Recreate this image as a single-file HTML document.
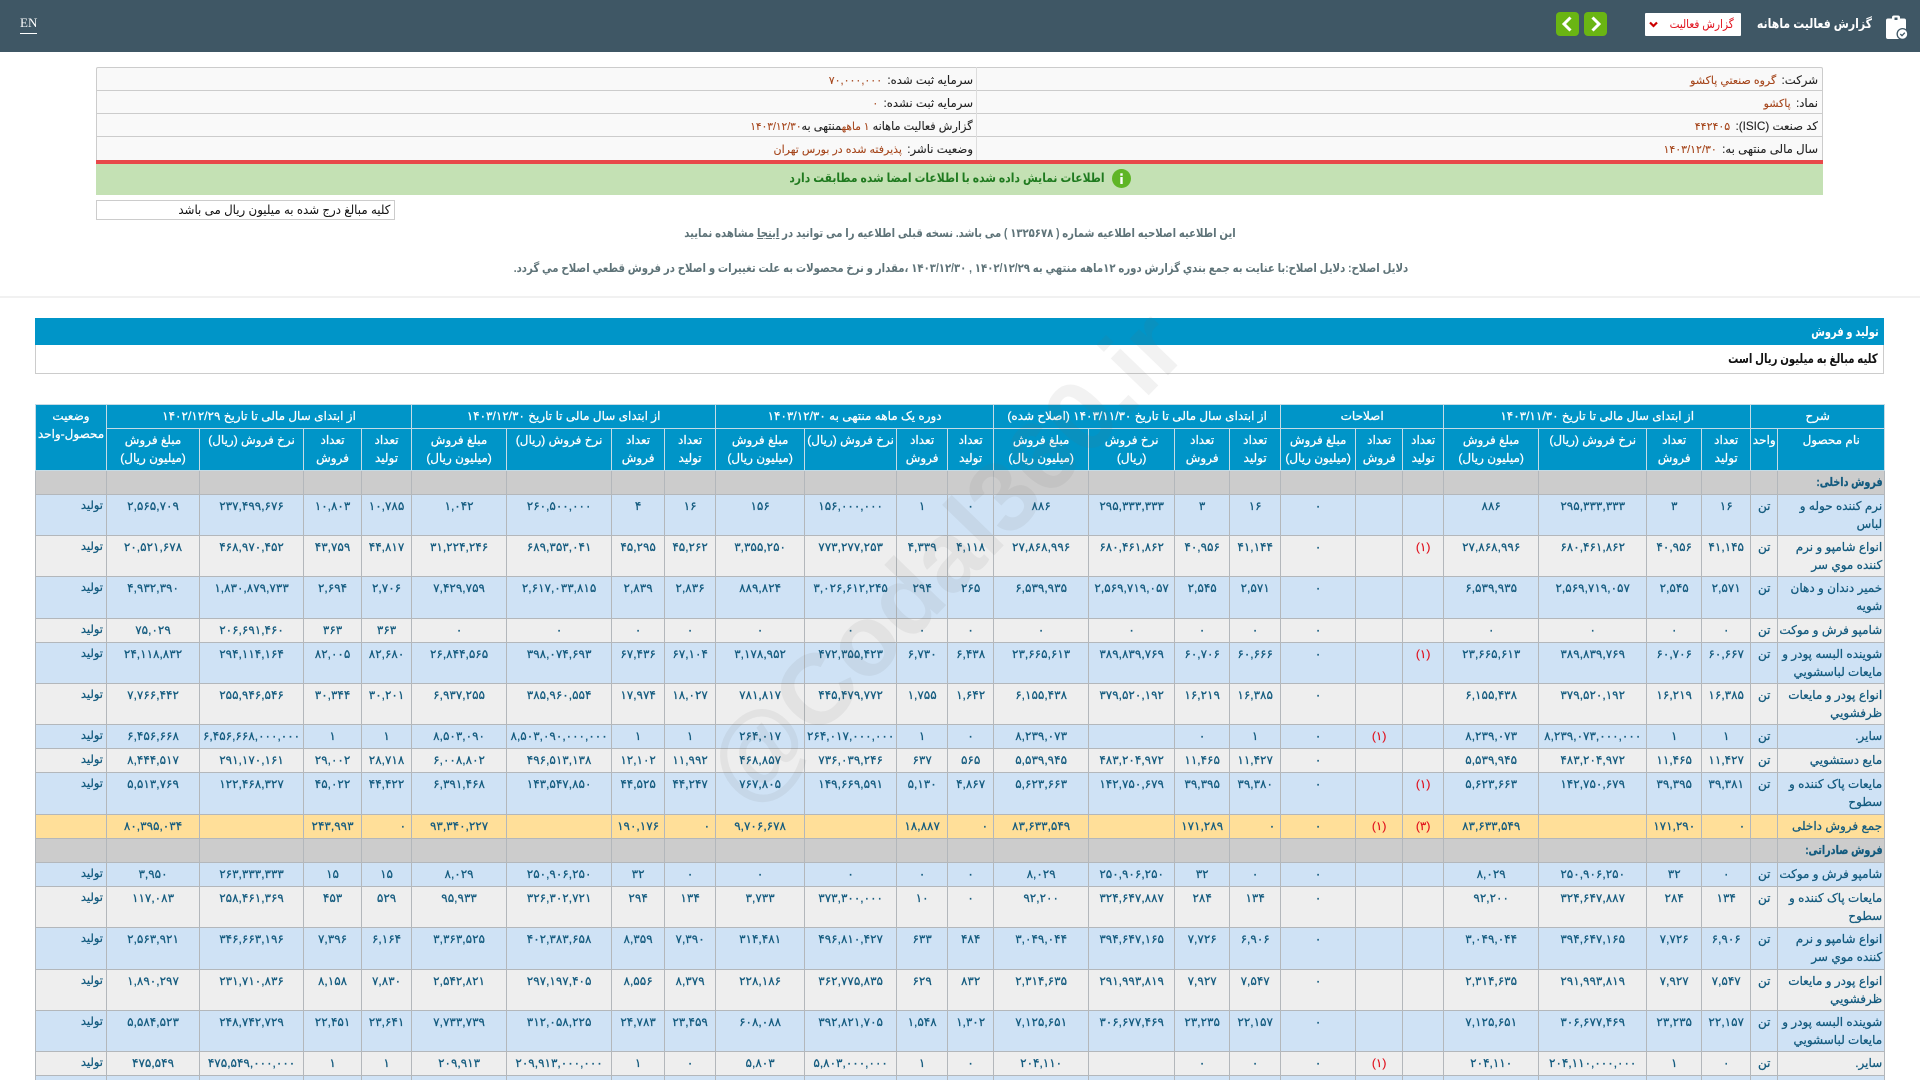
<!DOCTYPE html>
<html lang="fa">
<head>
<meta charset="utf-8">
<title>گزارش فعالیت ماهانه</title>
<style>
html,body{margin:0;padding:0;width:1920px;height:1080px;overflow:hidden;background:#fff}
body{font-family:"Liberation Sans","DejaVu Sans",sans-serif;position:relative}
.a{position:absolute;white-space:nowrap}
.sr{transform-origin:right center}
.sc{transform-origin:center center}
#top{left:0;top:0;width:1920px;height:52px;background:#3f5765}
#info{left:96px;top:67px;width:1727px;height:93px;box-sizing:border-box;border:1px solid #ccc;border-bottom:0;border-radius:2px 2px 0 0;background:#f9f9f9}
.ln{left:96px;width:1727px;height:1px;background:#ccc}
.lb{font-size:11.7px;color:#222;line-height:23px;direction:rtl;-webkit-text-stroke:.1px #222}
.lb b{font-weight:normal;color:#a5451b;font-size:11px;padding:0 2px;-webkit-text-stroke:.1px #a5451b}
table{position:absolute;left:35px;top:404px;width:1849px;border-collapse:collapse;table-layout:fixed;direction:rtl;font-size:12px;color:#125a7e;-webkit-text-stroke:.25px #125a7e}
th{background:#0095c8;color:#fff;font-weight:normal;border:1px solid #c5dbe6;padding:3px 0 0;line-height:17.5px;vertical-align:top;font-size:12px;white-space:nowrap;overflow:hidden;-webkit-text-stroke:.25px #fff}
td{border:1px solid #b3b7bb;padding:2px 0 0;line-height:18px;text-align:center;vertical-align:top;white-space:nowrap;overflow:visible}
tr.h1{height:24px}tr.h2{height:42px}
tr.l{height:41px}tr.x{height:42px}tr.u{height:24px}
.b td{background:#cfe2f5}
.g td{background:#eee}
.c td{background:#ccc}
.t td{background:#ffdf99}
td.n{text-align:right;padding-right:2px;padding-top:3px;line-height:17.5px;font-size:12px}
td.s{text-align:right;padding-right:3px;font-size:11.5px}
td.e{color:#e0101c;-webkit-text-stroke:.15px #e0101c}
td.r{text-align:right;padding-right:5px}
td.z{letter-spacing:1px}
.c td.n b{display:inline-block;transform:scaleX(.8);transform-origin:right center}
#wm{left:945px;top:558px;font:bold 100px "Liberation Sans",sans-serif;color:rgba(110,110,110,.085);transform:translate(-50%,-50%) rotate(-46deg);z-index:5}
</style>
</head>
<body>
<div class="a" id="top"></div>
<div class="a" style="left:20px;top:15px;font:13px 'Liberation Serif',serif;color:#fff;height:18px;border-bottom:1px solid #fff;line-height:15px">EN</div>
<svg class="a" style="left:1556px;top:12px" width="23" height="24" viewBox="0 0 23 24"><rect width="23" height="24" rx="4" fill="#6ab513"/><path d="M14.5 5.5 8 12l6.500 6.500" fill="none" stroke="#fff" stroke-width="3"/></svg>
<svg class="a" style="left:1584px;top:12px" width="23" height="24" viewBox="0 0 23 24"><rect width="23" height="24" rx="4" fill="#6ab513"/><path d="M8.500 5.500 15 12l-6.500 6.500" fill="none" stroke="#fff" stroke-width="3"/></svg>
<div class="a" style="left:1645px;top:13px;width:96px;height:23px;background:#fff;border-radius:1px"></div>
<svg class="a" style="left:1649px;top:21px" width="9" height="7" viewBox="0 0 9 7"><path d="M1 1.500 4.500 5 8 1.500" fill="none" stroke="#c00" stroke-width="2.200"/></svg>
<div class="a sr" style="right:186px;top:13px;line-height:23px;font-size:12px;color:#e0101c;direction:rtl;transform:scaleX(.87)">گزارش فعالیت</div>
<div class="a sr" style="right:48px;top:12px;line-height:23px;font-size:13px;font-weight:bold;color:#fff;direction:rtl;transform:scaleX(.84)">گزارش فعالیت ماهانه</div>
<svg class="a" style="left:1886px;top:15px" width="23" height="25" viewBox="0 0 23 25"><path d="M2 3.500h4V2.500a2 2 0 0 1 2-2h4a2 2 0 0 1 2 2v1h4a2 2 0 0 1 2 2V24H2a2 2 0 0 1-2-2V5.500a2 2 0 0 1 2-2z" fill="#fff"/><rect x="8.500" y="2.500" width="3" height="2.500" fill="#3f5765"/><circle cx="16.500" cy="19" r="6" fill="#3f5765"/><circle cx="16.500" cy="19" r="4.700" fill="#fff"/><path d="M14.300 19l1.700 1.700 2.800-3" fill="none" stroke="#3f5765" stroke-width="1.300"/></svg>

<div class="a" id="info"></div>
<div class="a ln" style="top:90px"></div>
<div class="a ln" style="top:113px"></div>
<div class="a ln" style="top:136px"></div>
<div class="a" style="left:976px;top:67px;width:1px;height:93px;background:#ddd"></div>
<div class="a lb" style="right:102px;top:69px">شرکت: <b>گروه صنعتي پاکشو</b></div>
<div class="a lb" style="right:102px;top:92px">نماد: <b>پاکشو</b></div>
<div class="a lb" style="right:102px;top:115px">کد صنعت (ISIC): <b>۴۴۲۴۰۵</b></div>
<div class="a lb" style="right:102px;top:138px">سال مالی منتهی به: <b>۱۴۰۳/۱۲/۳۰</b></div>
<div class="a lb" style="right:947px;top:69px">سرمایه ثبت شده: <b>۷۰,۰۰۰,۰۰۰</b></div>
<div class="a lb" style="right:947px;top:92px">سرمایه ثبت نشده: <b>۰</b></div>
<div class="a lb sr" style="right:947px;top:115px;transform:scaleX(.96)">گزارش فعالیت ماهانه <b style="padding:0">۱ ماهه</b>منتهی به<b style="padding:0">۱۴۰۳/۱۲/۳۰</b></div>
<div class="a lb" style="right:947px;top:138px">وضعیت ناشر: <b>پذیرفته شده در بورس تهران</b></div>

<div class="a" style="left:96px;top:160px;width:1727px;height:4px;background:#e8484a"></div>
<div class="a" style="left:96px;top:164px;width:1727px;height:31px;background:#c4e1b4"></div>
<div class="a sr" style="right:815px;top:164px;line-height:29px;font-size:12.500px;font-weight:bold;color:#1f7a1f;direction:rtl;transform:scaleX(.86)">اطلاعات نمایش داده شده با اطلاعات امضا شده مطابقت دارد</div>
<svg class="a" style="left:1112px;top:169px" width="19" height="19" viewBox="0 0 19 19"><circle cx="9.500" cy="9.500" r="9.500" fill="#5fb526"/><rect x="8.300" y="8" width="2.400" height="7" fill="#fff"/><rect x="8.300" y="4.300" width="2.400" height="2.400" fill="#fff"/></svg>

<div class="a" style="left:96px;top:200px;width:299px;height:20px;box-sizing:border-box;border:1px solid #ccc;background:#fff"></div>
<div class="a sr" style="right:1530px;top:200px;line-height:20px;font-size:12.500px;color:#111;direction:rtl;transform:scaleX(.945)">کلیه مبالغ درج شده به میلیون ریال می باشد</div>

<div class="a sc" style="left:360px;width:1200px;top:224px;line-height:18px;text-align:center;font-size:12px;font-weight:bold;color:#5e7378;direction:rtl;transform:scaleX(.84)">این اطلاعیه اصلاحیه اطلاعیه شماره ( ۱۳۲۵۶۷۸ ) می باشد. نسخه قبلی اطلاعیه را می توانید در <u>اینجا</u> مشاهده نمایید</div>
<div class="a sc" style="left:361px;width:1200px;top:259px;line-height:18px;text-align:center;font-size:12px;font-weight:bold;color:#5e7378;direction:rtl;transform:scaleX(.845)">دلایل اصلاح: دلایل اصلاح:با عنایت به جمع بندي گزارش دوره ۱۲ماهه منتهي به ۱۴۰۲/۱۲/۲۹ , ۱۴۰۳/۱۲/۳۰ ،مقدار و نرخ محصولات به علت تغییرات و اصلاح در فروش قطعي اصلاح مي گردد.</div>
<div class="a" style="left:0;top:296px;width:1920px;height:2px;background:#f1f1f1"></div>

<div class="a" style="left:35px;top:318px;width:1849px;height:27px;background:#0095c8"></div>
<div class="a sr" style="right:41px;top:318px;line-height:27px;font-size:13px;font-weight:bold;color:#fff;direction:rtl;transform:scaleX(.76)">تولید و فروش</div>
<div class="a" style="left:35px;top:345px;width:1849px;height:29px;box-sizing:border-box;border:1px solid #ccc;border-top:0"></div>
<div class="a sr" style="right:42px;top:345px;line-height:28px;font-size:13px;font-weight:bold;color:#111;direction:rtl;transform:scaleX(.78)">کلیه مبالغ به میلیون ریال است</div>

<table>
<colgroup>
<col style="width:107px"><col style="width:27px">
<col style="width:49px"><col style="width:55px"><col style="width:108px"><col style="width:95px">
<col style="width:41px"><col style="width:47px"><col style="width:75px">
<col style="width:51px"><col style="width:55px"><col style="width:86px"><col style="width:95px">
<col style="width:46px"><col style="width:51px"><col style="width:92px"><col style="width:89px">
<col style="width:51px"><col style="width:53px"><col style="width:105px"><col style="width:95px">
<col style="width:50px"><col style="width:58px"><col style="width:104px"><col style="width:93px">
<col style="width:71px">
</colgroup>
<tr class="h1"><th colspan="2">شرح</th><th colspan="4">از ابتدای سال مالی تا تاریخ ۱۴۰۳/۱۱/۳۰</th><th colspan="3">اصلاحات</th><th colspan="4">از ابتدای سال مالی تا تاریخ ۱۴۰۳/۱۱/۳۰ (اصلاح شده)</th><th colspan="4">دوره یک ماهه منتهی به ۱۴۰۳/۱۲/۳۰</th><th colspan="4">از ابتدای سال مالی تا تاریخ ۱۴۰۳/۱۲/۳۰</th><th colspan="4">از ابتدای سال مالی تا تاریخ ۱۴۰۲/۱۲/۲۹</th><th rowspan="2">وضعیت<br>محصول-واحد</th></tr>
<tr class="h2"><th>نام محصول</th><th>واحد</th><th>تعداد<br>تولید</th><th>تعداد<br>فروش</th><th>نرخ فروش (ریال)</th><th>مبلغ فروش<br>(میلیون ریال)</th><th>تعداد<br>تولید</th><th>تعداد<br>فروش</th><th>مبلغ فروش<br>(میلیون ریال)</th><th>تعداد<br>تولید</th><th>تعداد<br>فروش</th><th>نرخ فروش<br>(ریال)</th><th>مبلغ فروش<br>(میلیون ریال)</th><th>تعداد<br>تولید</th><th>تعداد<br>فروش</th><th>نرخ فروش (ریال)</th><th>مبلغ فروش<br>(میلیون ریال)</th><th>تعداد<br>تولید</th><th>تعداد<br>فروش</th><th>نرخ فروش (ریال)</th><th>مبلغ فروش<br>(میلیون ریال)</th><th>تعداد<br>تولید</th><th>تعداد<br>فروش</th><th>نرخ فروش (ریال)</th><th>مبلغ فروش<br>(میلیون ریال)</th></tr>
<tr class="u c"><td class="n"><b>فروش داخلی:</b></td><td></td><td></td><td></td><td></td><td></td><td></td><td></td><td></td><td></td><td></td><td></td><td></td><td></td><td></td><td></td><td></td><td></td><td></td><td></td><td></td><td></td><td></td><td></td><td></td><td></td></tr>
<tr class="l b"><td class="n">نرم کننده حوله و<br>لباس</td><td>تن</td><td>۱۶</td><td>۳</td><td>۲۹۵,۳۳۳,۳۳۳</td><td>۸۸۶</td><td></td><td></td><td>۰</td><td>۱۶</td><td>۳</td><td>۲۹۵,۳۳۳,۳۳۳</td><td>۸۸۶</td><td>۰</td><td>۱</td><td>۱۵۶,۰۰۰,۰۰۰</td><td>۱۵۶</td><td>۱۶</td><td>۴</td><td>۲۶۰,۵۰۰,۰۰۰</td><td>۱,۰۴۲</td><td>۱۰,۷۸۵</td><td>۱۰,۸۰۳</td><td>۲۳۷,۴۹۹,۶۷۶</td><td>۲,۵۶۵,۷۰۹</td><td class="s">تولید</td></tr>
<tr class="l g"><td class="n">انواع شامپو و نرم<br>کننده موي سر</td><td>تن</td><td>۴۱,۱۴۵</td><td>۴۰,۹۵۶</td><td>۶۸۰,۴۶۱,۸۶۲</td><td>۲۷,۸۶۸,۹۹۶</td><td class="e">(۱)</td><td></td><td>۰</td><td>۴۱,۱۴۴</td><td>۴۰,۹۵۶</td><td>۶۸۰,۴۶۱,۸۶۲</td><td>۲۷,۸۶۸,۹۹۶</td><td>۴,۱۱۸</td><td>۴,۳۳۹</td><td>۷۷۳,۲۷۷,۲۵۳</td><td>۳,۳۵۵,۲۵۰</td><td>۴۵,۲۶۲</td><td>۴۵,۲۹۵</td><td>۶۸۹,۳۵۳,۰۴۱</td><td>۳۱,۲۲۴,۲۴۶</td><td>۴۴,۸۱۷</td><td>۴۳,۷۵۹</td><td>۴۶۸,۹۷۰,۴۵۲</td><td>۲۰,۵۲۱,۶۷۸</td><td class="s">تولید</td></tr>
<tr class="x b"><td class="n">خمیر دندان و دهان<br>شویه</td><td>تن</td><td>۲,۵۷۱</td><td>۲,۵۴۵</td><td>۲,۵۶۹,۷۱۹,۰۵۷</td><td>۶,۵۳۹,۹۳۵</td><td></td><td></td><td>۰</td><td>۲,۵۷۱</td><td>۲,۵۴۵</td><td>۲,۵۶۹,۷۱۹,۰۵۷</td><td>۶,۵۳۹,۹۳۵</td><td>۲۶۵</td><td>۲۹۴</td><td>۳,۰۲۶,۶۱۲,۲۴۵</td><td>۸۸۹,۸۲۴</td><td>۲,۸۳۶</td><td>۲,۸۳۹</td><td>۲,۶۱۷,۰۳۳,۸۱۵</td><td>۷,۴۲۹,۷۵۹</td><td>۲,۷۰۶</td><td>۲,۶۹۴</td><td>۱,۸۳۰,۸۷۹,۷۳۳</td><td>۴,۹۳۲,۳۹۰</td><td class="s">تولید</td></tr>
<tr class="u g"><td class="n">شامپو فرش و موکت</td><td>تن</td><td>۰</td><td>۰</td><td>۰</td><td>۰</td><td></td><td></td><td>۰</td><td>۰</td><td>۰</td><td>۰</td><td>۰</td><td>۰</td><td>۰</td><td>۰</td><td>۰</td><td>۰</td><td>۰</td><td>۰</td><td>۰</td><td>۳۶۳</td><td>۳۶۳</td><td>۲۰۶,۶۹۱,۴۶۰</td><td>۷۵,۰۲۹</td><td class="s">تولید</td></tr>
<tr class="l b"><td class="n">شوینده البسه پودر و<br>مایعات لباسشویي</td><td>تن</td><td>۶۰,۶۶۷</td><td>۶۰,۷۰۶</td><td>۳۸۹,۸۳۹,۷۶۹</td><td>۲۳,۶۶۵,۶۱۳</td><td class="e">(۱)</td><td></td><td>۰</td><td>۶۰,۶۶۶</td><td>۶۰,۷۰۶</td><td>۳۸۹,۸۳۹,۷۶۹</td><td>۲۳,۶۶۵,۶۱۳</td><td>۶,۴۳۸</td><td>۶,۷۳۰</td><td>۴۷۲,۳۵۵,۴۲۳</td><td>۳,۱۷۸,۹۵۲</td><td>۶۷,۱۰۴</td><td>۶۷,۴۳۶</td><td>۳۹۸,۰۷۴,۶۹۳</td><td>۲۶,۸۴۴,۵۶۵</td><td>۸۲,۶۸۰</td><td>۸۲,۰۰۵</td><td>۲۹۴,۱۱۴,۱۶۴</td><td>۲۴,۱۱۸,۸۳۲</td><td class="s">تولید</td></tr>
<tr class="l g"><td class="n">انواع پودر و مایعات<br>ظرفشويي</td><td>تن</td><td>۱۶,۳۸۵</td><td>۱۶,۲۱۹</td><td>۳۷۹,۵۲۰,۱۹۲</td><td>۶,۱۵۵,۴۳۸</td><td></td><td></td><td>۰</td><td>۱۶,۳۸۵</td><td>۱۶,۲۱۹</td><td>۳۷۹,۵۲۰,۱۹۲</td><td>۶,۱۵۵,۴۳۸</td><td>۱,۶۴۲</td><td>۱,۷۵۵</td><td>۴۴۵,۴۷۹,۷۷۲</td><td>۷۸۱,۸۱۷</td><td>۱۸,۰۲۷</td><td>۱۷,۹۷۴</td><td>۳۸۵,۹۶۰,۵۵۴</td><td>۶,۹۳۷,۲۵۵</td><td>۳۰,۲۰۱</td><td>۳۰,۳۴۴</td><td>۲۵۵,۹۴۶,۵۴۶</td><td>۷,۷۶۶,۴۴۲</td><td class="s">تولید</td></tr>
<tr class="u b"><td class="n">سایر.</td><td>تن</td><td>۱</td><td>۱</td><td class="z">۸,۲۳۹,۰۷۳,۰۰۰,۰۰۰</td><td>۸,۲۳۹,۰۷۳</td><td></td><td class="e">(۱)</td><td>۰</td><td>۱</td><td>۰</td><td></td><td>۸,۲۳۹,۰۷۳</td><td>۰</td><td>۱</td><td class="z">۲۶۴,۰۱۷,۰۰۰,۰۰۰</td><td>۲۶۴,۰۱۷</td><td>۱</td><td>۱</td><td class="z">۸,۵۰۳,۰۹۰,۰۰۰,۰۰۰</td><td>۸,۵۰۳,۰۹۰</td><td>۱</td><td>۱</td><td class="z">۶,۴۵۶,۶۶۸,۰۰۰,۰۰۰</td><td>۶,۴۵۶,۶۶۸</td><td class="s">تولید</td></tr>
<tr class="u g"><td class="n">مایع دستشويي</td><td>تن</td><td>۱۱,۴۲۷</td><td>۱۱,۴۶۵</td><td>۴۸۳,۲۰۴,۹۷۲</td><td>۵,۵۳۹,۹۴۵</td><td></td><td></td><td>۰</td><td>۱۱,۴۲۷</td><td>۱۱,۴۶۵</td><td>۴۸۳,۲۰۴,۹۷۲</td><td>۵,۵۳۹,۹۴۵</td><td>۵۶۵</td><td>۶۳۷</td><td>۷۳۶,۰۳۹,۲۴۶</td><td>۴۶۸,۸۵۷</td><td>۱۱,۹۹۲</td><td>۱۲,۱۰۲</td><td>۴۹۶,۵۱۳,۱۳۸</td><td>۶,۰۰۸,۸۰۲</td><td>۲۸,۷۱۸</td><td>۲۹,۰۰۲</td><td>۲۹۱,۱۷۰,۱۶۱</td><td>۸,۴۴۴,۵۱۷</td><td class="s">تولید</td></tr>
<tr class="x b"><td class="n">مایعات پاک کننده و<br>سطوح</td><td>تن</td><td>۳۹,۳۸۱</td><td>۳۹,۳۹۵</td><td>۱۴۲,۷۵۰,۶۷۹</td><td>۵,۶۲۳,۶۶۳</td><td class="e">(۱)</td><td></td><td>۰</td><td>۳۹,۳۸۰</td><td>۳۹,۳۹۵</td><td>۱۴۲,۷۵۰,۶۷۹</td><td>۵,۶۲۳,۶۶۳</td><td>۴,۸۶۷</td><td>۵,۱۳۰</td><td>۱۴۹,۶۶۹,۵۹۱</td><td>۷۶۷,۸۰۵</td><td>۴۴,۲۴۷</td><td>۴۴,۵۲۵</td><td>۱۴۳,۵۴۷,۸۵۰</td><td>۶,۳۹۱,۴۶۸</td><td>۴۴,۴۲۲</td><td>۴۵,۰۲۲</td><td>۱۲۲,۴۶۸,۳۲۷</td><td>۵,۵۱۳,۷۶۹</td><td class="s">تولید</td></tr>
<tr class="u t"><td class="n">جمع فروش داخلی</td><td></td><td class="r">۰</td><td>۱۷۱,۲۹۰</td><td></td><td>۸۳,۶۳۳,۵۴۹</td><td class="e">(۳)</td><td class="e">(۱)</td><td>۰</td><td class="r">۰</td><td>۱۷۱,۲۸۹</td><td></td><td>۸۳,۶۳۳,۵۴۹</td><td class="r">۰</td><td>۱۸,۸۸۷</td><td></td><td>۹,۷۰۶,۶۷۸</td><td class="r">۰</td><td>۱۹۰,۱۷۶</td><td></td><td>۹۳,۳۴۰,۲۲۷</td><td class="r">۰</td><td>۲۴۳,۹۹۳</td><td></td><td>۸۰,۳۹۵,۰۳۴</td><td></td></tr>
<tr class="u c"><td class="n"><b>فروش صادراتی:</b></td><td></td><td></td><td></td><td></td><td></td><td></td><td></td><td></td><td></td><td></td><td></td><td></td><td></td><td></td><td></td><td></td><td></td><td></td><td></td><td></td><td></td><td></td><td></td><td></td><td></td></tr>
<tr class="u b"><td class="n">شامپو فرش و موکت</td><td>تن</td><td>۰</td><td>۳۲</td><td>۲۵۰,۹۰۶,۲۵۰</td><td>۸,۰۲۹</td><td></td><td></td><td>۰</td><td>۰</td><td>۳۲</td><td>۲۵۰,۹۰۶,۲۵۰</td><td>۸,۰۲۹</td><td>۰</td><td>۰</td><td>۰</td><td>۰</td><td>۰</td><td>۳۲</td><td>۲۵۰,۹۰۶,۲۵۰</td><td>۸,۰۲۹</td><td>۱۵</td><td>۱۵</td><td>۲۶۳,۳۳۳,۳۳۳</td><td>۳,۹۵۰</td><td class="s">تولید</td></tr>
<tr class="l g"><td class="n">مایعات پاک کننده و<br>سطوح</td><td>تن</td><td>۱۳۴</td><td>۲۸۴</td><td>۳۲۴,۶۴۷,۸۸۷</td><td>۹۲,۲۰۰</td><td></td><td></td><td>۰</td><td>۱۳۴</td><td>۲۸۴</td><td>۳۲۴,۶۴۷,۸۸۷</td><td>۹۲,۲۰۰</td><td>۰</td><td>۱۰</td><td>۳۷۳,۳۰۰,۰۰۰</td><td>۳,۷۳۳</td><td>۱۳۴</td><td>۲۹۴</td><td>۳۲۶,۳۰۲,۷۲۱</td><td>۹۵,۹۳۳</td><td>۵۲۹</td><td>۴۵۳</td><td>۲۵۸,۴۶۱,۳۶۹</td><td>۱۱۷,۰۸۳</td><td class="s">تولید</td></tr>
<tr class="x b"><td class="n">انواع شامپو و نرم<br>کننده موي سر</td><td>تن</td><td>۶,۹۰۶</td><td>۷,۷۲۶</td><td>۳۹۴,۶۴۷,۱۶۵</td><td>۳,۰۴۹,۰۴۴</td><td></td><td></td><td>۰</td><td>۶,۹۰۶</td><td>۷,۷۲۶</td><td>۳۹۴,۶۴۷,۱۶۵</td><td>۳,۰۴۹,۰۴۴</td><td>۴۸۴</td><td>۶۳۳</td><td>۴۹۶,۸۱۰,۴۲۷</td><td>۳۱۴,۴۸۱</td><td>۷,۳۹۰</td><td>۸,۳۵۹</td><td>۴۰۲,۳۸۳,۶۵۸</td><td>۳,۳۶۳,۵۲۵</td><td>۶,۱۶۴</td><td>۷,۳۹۶</td><td>۳۴۶,۶۶۳,۱۹۶</td><td>۲,۵۶۳,۹۲۱</td><td class="s">تولید</td></tr>
<tr class="l g"><td class="n">انواع پودر و مایعات<br>ظرفشويي</td><td>تن</td><td>۷,۵۴۷</td><td>۷,۹۲۷</td><td>۲۹۱,۹۹۳,۸۱۹</td><td>۲,۳۱۴,۶۳۵</td><td></td><td></td><td>۰</td><td>۷,۵۴۷</td><td>۷,۹۲۷</td><td>۲۹۱,۹۹۳,۸۱۹</td><td>۲,۳۱۴,۶۳۵</td><td>۸۳۲</td><td>۶۲۹</td><td>۳۶۲,۷۷۵,۸۳۵</td><td>۲۲۸,۱۸۶</td><td>۸,۳۷۹</td><td>۸,۵۵۶</td><td>۲۹۷,۱۹۷,۴۰۵</td><td>۲,۵۴۲,۸۲۱</td><td>۷,۸۳۰</td><td>۸,۱۵۸</td><td>۲۳۱,۷۱۰,۸۳۶</td><td>۱,۸۹۰,۲۹۷</td><td class="s">تولید</td></tr>
<tr class="l b"><td class="n">شوینده البسه پودر و<br>مایعات لباسشویي</td><td>تن</td><td>۲۲,۱۵۷</td><td>۲۳,۲۳۵</td><td>۳۰۶,۶۷۷,۴۶۹</td><td>۷,۱۲۵,۶۵۱</td><td></td><td></td><td>۰</td><td>۲۲,۱۵۷</td><td>۲۳,۲۳۵</td><td>۳۰۶,۶۷۷,۴۶۹</td><td>۷,۱۲۵,۶۵۱</td><td>۱,۳۰۲</td><td>۱,۵۴۸</td><td>۳۹۲,۸۲۱,۷۰۵</td><td>۶۰۸,۰۸۸</td><td>۲۳,۴۵۹</td><td>۲۴,۷۸۳</td><td>۳۱۲,۰۵۸,۲۲۵</td><td>۷,۷۳۳,۷۳۹</td><td>۲۳,۶۴۱</td><td>۲۲,۴۵۱</td><td>۲۴۸,۷۴۲,۷۲۹</td><td>۵,۵۸۴,۵۲۳</td><td class="s">تولید</td></tr>
<tr class="u g"><td class="n">سایر.</td><td>تن</td><td>۰</td><td>۱</td><td class="z">۲۰۴,۱۱۰,۰۰۰,۰۰۰</td><td>۲۰۴,۱۱۰</td><td></td><td class="e">(۱)</td><td>۰</td><td>۰</td><td>۰</td><td></td><td>۲۰۴,۱۱۰</td><td>۰</td><td>۱</td><td class="z">۵,۸۰۳,۰۰۰,۰۰۰</td><td>۵,۸۰۳</td><td>۰</td><td>۱</td><td class="z">۲۰۹,۹۱۳,۰۰۰,۰۰۰</td><td>۲۰۹,۹۱۳</td><td>۱</td><td>۱</td><td class="z">۴۷۵,۵۴۹,۰۰۰,۰۰۰</td><td>۴۷۵,۵۴۹</td><td class="s">تولید</td></tr>
<tr class="u b"><td></td><td></td><td></td><td></td><td></td><td></td><td></td><td></td><td></td><td></td><td></td><td></td><td></td><td></td><td></td><td></td><td></td><td></td><td></td><td></td><td></td><td></td><td></td><td></td><td></td><td></td></tr>
</table>
<div class="a" id="wm">@Codal360.ir</div>
</body>
</html>
